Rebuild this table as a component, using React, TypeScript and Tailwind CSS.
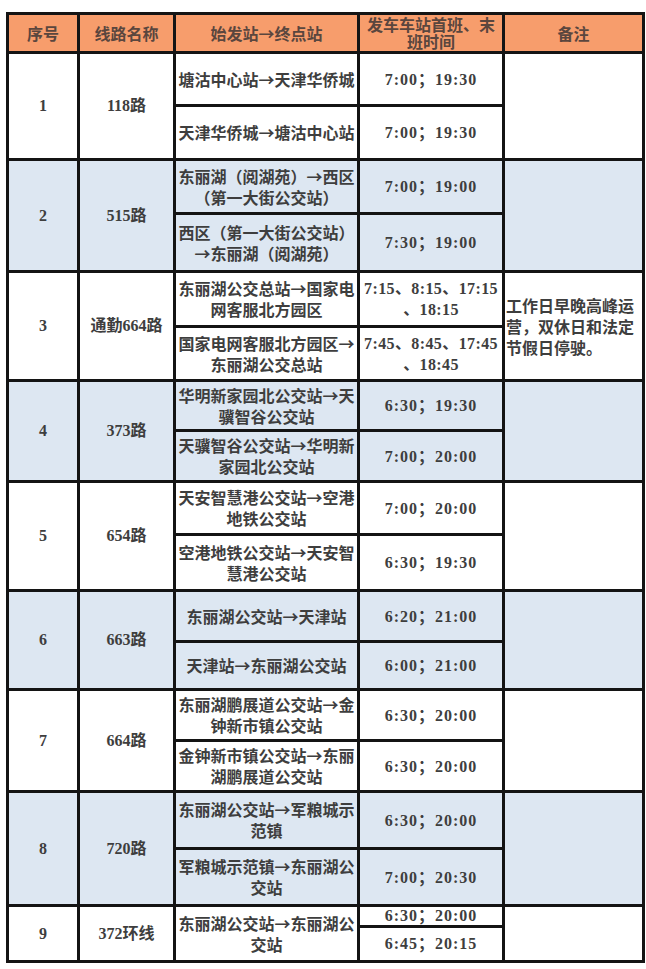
import React from "react";

type Sub = { route: string[]; time: string[]; h: string };
type Group = { no: string; name: string; blue: boolean; subs: Sub[]; note?: string[] };

const groups: Group[] = [
  {
    no: "1",
    name: "118路",
    blue: false,
    subs: [
      { route: ["塘沽中心站→天津华侨城"], time: ["7:00；19:30"], h: "h-[53px]" },
      { route: ["天津华侨城→塘沽中心站"], time: ["7:00；19:30"], h: "h-[54px]" },
    ],
  },
  {
    no: "2",
    name: "515路",
    blue: true,
    subs: [
      { route: ["东丽湖（阅湖苑）→西区", "（第一大街公交站）"], time: ["7:00；19:00"], h: "h-[54px]" },
      { route: ["西区（第一大街公交站）", "→东丽湖（阅湖苑）"], time: ["7:30；19:00"], h: "h-[58px]" },
    ],
  },
  {
    no: "3",
    name: "通勤664路",
    blue: false,
    subs: [
      { route: ["东丽湖公交总站→国家电", "网客服北方园区"], time: ["7:15、8:15、17:15", "、18:15"], h: "h-[55px]" },
      { route: ["国家电网客服北方园区→", "东丽湖公交总站"], time: ["7:45、8:45、17:45", "、18:45"], h: "h-[54px]" },
    ],
    note: ["工作日早晚高峰运", "营，双休日和法定", "节假日停驶。"],
  },
  {
    no: "4",
    name: "373路",
    blue: true,
    subs: [
      { route: ["华明新家园北公交站→天", "骥智谷公交站"], time: ["6:30；19:30"], h: "h-[50px]" },
      { route: ["天骥智谷公交站→华明新", "家园北公交站"], time: ["7:00；20:00"], h: "h-[51px]" },
    ],
  },
  {
    no: "5",
    name: "654路",
    blue: false,
    subs: [
      { route: ["天安智慧港公交站→空港", "地铁公交站"], time: ["7:00；20:00"], h: "h-[53px]" },
      { route: ["空港地铁公交站→天安智", "慧港公交站"], time: ["6:30；19:30"], h: "h-[56px]" },
    ],
  },
  {
    no: "6",
    name: "663路",
    blue: true,
    subs: [
      { route: ["东丽湖公交站→天津站"], time: ["6:20；21:00"], h: "h-[51px]" },
      { route: ["天津站→东丽湖公交站"], time: ["6:00；21:00"], h: "h-[48px]" },
    ],
  },
  {
    no: "7",
    name: "664路",
    blue: false,
    subs: [
      { route: ["东丽湖鹏展道公交站→金", "钟新市镇公交站"], time: ["6:30；20:00"], h: "h-[51px]" },
      { route: ["金钟新市镇公交站→东丽", "湖鹏展道公交站"], time: ["6:30；20:00"], h: "h-[51px]" },
    ],
  },
  {
    no: "8",
    name: "720路",
    blue: true,
    subs: [
      { route: ["东丽湖公交站→军粮城示", "范镇"], time: ["6:30；20:00"], h: "h-[57px]" },
      { route: ["军粮城示范镇→东丽湖公", "交站"], time: ["7:00；20:30"], h: "h-[57px]" },
    ],
  },
];

const cell = "border-[3px] border-[#141414] p-0 text-center align-middle";
const cjk = "font-['Noto_Sans_CJK_SC',sans-serif]";
const serif = "font-['Liberation_Serif','Noto_Sans_CJK_SC',serif]";

function Lines({ lines, cls }: { lines: string[]; cls?: string }) {
  return (
    <div className={cls}>
      {lines.map((l, i) => (
        <div key={i} className="whitespace-nowrap">
          {l}
        </div>
      ))}
    </div>
  );
}

export default function App() {
  return (
    <div className="w-[646px] h-[969px] bg-white pt-[12px] pl-[6px] overflow-hidden">
      <table className="table-fixed border-collapse w-[636px] text-[16px] font-bold text-[#3e3e3e]">
        <colgroup>
          <col className="w-[71px]" />
          <col className="w-[96px]" />
          <col className="w-[184px]" />
          <col className="w-[145px]" />
          <col className="w-[140px]" />
        </colgroup>
        <thead>
          <tr className="h-[39px] bg-[#f79d6c] text-[#5a463e]">
            <th className={`${cell} ${cjk} leading-[19px]`}>序号</th>
            <th className={`${cell} ${cjk} leading-[19px]`}>线路名称</th>
            <th className={`${cell} ${cjk} leading-[19px]`}>始发站→终点站</th>
            <th className={`${cell} ${cjk} leading-[17px]`}>
              <div>发车车站首班、末</div>
              <div>班时间</div>
            </th>
            <th className={`${cell} ${cjk} leading-[19px]`}>备注</th>
          </tr>
        </thead>
        <tbody>
          {groups.map((g) =>
            g.subs.map((s, i) => (
              <tr key={g.no + "-" + i} className={`${s.h} ${g.blue ? "bg-[#dde7f2]" : "bg-white"}`}>
                {i === 0 && (
                  <>
                    <td rowSpan={2} className={`${cell} ${serif}`}>
                      {g.no}
                    </td>
                    <td rowSpan={2} className={`${cell} ${serif}`}>
                      {g.name}
                    </td>
                  </>
                )}
                <td className={`${cell} ${cjk} leading-[21px]`}>
                  <Lines lines={s.route} />
                </td>
                <td
                  className={`${cell} ${serif} leading-[21px] ${
                    s.time.length > 1 ? "tracking-[0.4px]" : "tracking-[1px]"
                  }`}
                >
                  <Lines lines={s.time} />
                </td>
                {i === 0 && (
                  <td rowSpan={2} className={`${cell} ${cjk} leading-[21px] text-left`}>
                    {g.note && <Lines lines={g.note} cls="pl-[1px]" />}
                  </td>
                )}
              </tr>
            ))
          )}
          <tr className="h-[21px] bg-white">
            <td rowSpan={2} className={`${cell} ${serif}`}>
              9
            </td>
            <td rowSpan={2} className={`${cell} ${serif}`}>
              372环线
            </td>
            <td rowSpan={2} className={`${cell} ${cjk} leading-[21px]`}>
              <Lines lines={["东丽湖公交站→东丽湖公", "交站"]} />
            </td>
            <td className={`${cell} ${serif} leading-[18px] tracking-[1px]`}>
              <div className="whitespace-nowrap">6:30；20:00</div>
            </td>
            <td rowSpan={2} className={cell}></td>
          </tr>
          <tr className="h-[35px] bg-white">
            <td className={`${cell} ${serif} leading-[20px] tracking-[1px]`}>
              <div className="whitespace-nowrap">6:45；20:15</div>
            </td>
          </tr>
        </tbody>
      </table>
    </div>
  );
}
